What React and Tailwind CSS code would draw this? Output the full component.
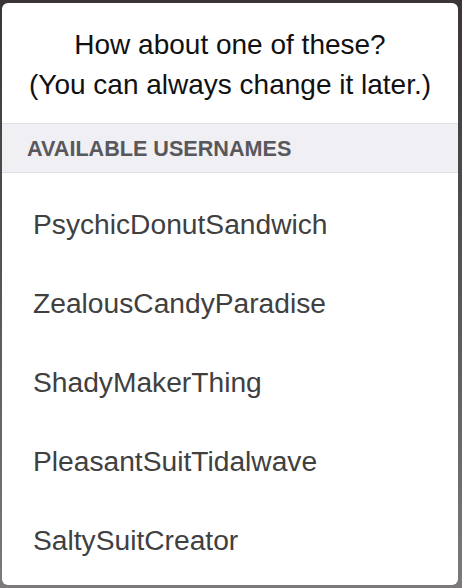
import React from "react";

const usernames = [
  "PsychicDonutSandwich",
  "ZealousCandyParadise",
  "ShadyMakerThing",
  "PleasantSuitTidalwave",
  "SaltySuitCreator",
];

export default function App() {
  return (
    <div
      className="w-[462px] h-[588px] pl-[2px] pt-[3px] bg-gradient-to-b from-[#3b3537] via-[#5a5657] to-[#7d7a7b]"
      style={{ fontFamily: '"Liberation Sans", Arial, sans-serif' }}
    >
      <div className="w-[456px] h-[582px] bg-white rounded-[6px] overflow-hidden flex flex-col">
        {/* prompt */}
        <div className="pt-[22px] pb-[18px] border-b border-[#dedee2] text-center text-[28px] leading-[40px] text-[#111]">
          <p>How about one of these?</p>
          <p>(You can always change it later.)</p>
        </div>

        {/* section header */}
        <div className="h-[49px] bg-[#efeff4] border-b border-[#dedee2] px-[25px] pt-[1px] text-[21.6px] leading-[47px] font-bold text-[#58585c]">
          AVAILABLE USERNAMES
        </div>

        {/* list */}
        <ul className="pt-[12px]">
          {usernames.map((name) => (
            <li
              key={name}
              className="h-[79px] px-[31px] text-[28.2px] leading-[79px] text-[#404040]"
            >
              {name}
            </li>
          ))}
        </ul>
      </div>
    </div>
  );
}
